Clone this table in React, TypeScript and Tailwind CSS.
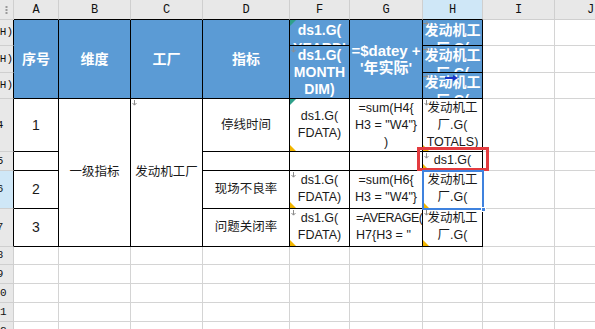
import React from 'react';

const ROW = ['', 'row-start-1', 'row-start-2', 'row-start-3', 'row-start-4', 'row-start-5', 'row-start-6', 'row-start-7', 'row-start-8', 'row-start-9', 'row-start-10', 'row-start-11', 'row-start-12', 'row-start-13'];
const COL = ['', 'col-start-1', 'col-start-2', 'col-start-3', 'col-start-4', 'col-start-5', 'col-start-6', 'col-start-7', 'col-start-8', 'col-start-9', 'col-start-10'];

const blue = 'relative overflow-hidden border-r border-b border-black bg-[#5b9bd5] text-white font-bold text-[14px] leading-[17px] flex flex-col items-center text-center whitespace-nowrap';
const body = 'relative overflow-hidden border-r border-b border-black bg-white text-[12.5px] leading-[17px] text-[#1a1a1a] flex flex-col items-center text-center whitespace-nowrap';
const empty = 'border-r border-b border-[#d4d4d4] bg-white';

// yellow corner flag, bottom-left
const Tri = () => (
  <svg className="absolute left-0 bottom-0" width="6" height="6" viewBox="0 0 6 6">
    <path d="M0 0L6 6H0Z" fill="#f2b600" />
  </svg>
);

// small gray expand arrow, top-left
const Down = () => (
  <svg className="absolute left-[1px] top-[1px]" width="5" height="6" viewBox="0 0 5 6">
    <path d="M2.5 0V5M0.5 3L2.5 5.2L4.5 3" stroke="#8c8c8c" strokeWidth="1" fill="none" />
  </svg>
);

const Right = () => (
  <svg className="absolute left-0 top-[1px]" width="6" height="5" viewBox="0 0 6 5">
    <path d="M0 2.5H5M3 0.5L5.2 2.5L3 4.5" stroke="#8c8c8c" strokeWidth="1" fill="none" />
  </svg>
);

const Teal = () => (
  <svg className="absolute left-0 top-0" width="6" height="6" viewBox="0 0 6 6">
    <path d="M0 0H6L0 6Z" fill="#2fa08a" />
  </svg>
);

const letters = ['A', 'B', 'C', 'D', 'F', 'G', 'H', 'I', 'J'];
const rowLabels = ['1(H)', '2(H)', '3(H)', '4', '5', '6', '7', '8', '9', '10', '11', '12'];

export default function App() {
  return (
    <div className="relative w-[595px] h-[329px] overflow-hidden bg-white font-['Liberation_Sans','Noto_Sans_CJK_SC',sans-serif]">
      <div className="grid grid-cols-[14px_45px_72px_72px_87px_60px_73px_60px_72px_72px] grid-rows-[20px_26px_27px_26px_53px_19px_38px_38px_18px_19px_19px_19px_19px]">
        {/* corner */}
        <div className="col-start-1 row-start-1 border-r border-b border-[#cfcfcf] bg-[#e8e8e8] flex items-center justify-center">
          <svg width="3" height="8" viewBox="0 0 3 8">
            <rect x="0.5" y="0" width="2" height="2" fill="#9a9a9a" />
            <rect x="0.5" y="3" width="2" height="2" fill="#9a9a9a" />
            <rect x="0.5" y="6" width="2" height="2" fill="#9a9a9a" />
          </svg>
        </div>

        {/* column headers */}
        {letters.map((l, i) => (
          <div
            key={l}
            className={`${COL[i + 2]} row-start-1 border-r border-b border-r-[#cfcfcf] ${i < 7 ? 'border-b-black' : 'border-b-[#cfcfcf]'} ${l === 'H' ? 'bg-[#cfe7f7]' : 'bg-[#e8e8e8]'} flex items-center justify-center font-['Liberation_Mono',monospace] text-[12px] text-[#111]`}
          >
            {l}
          </div>
        ))}

        {/* row headers */}
        {rowLabels.map((r, i) => (
          <div
            key={r}
            className={`col-start-1 ${ROW[i + 2]} overflow-hidden border-r border-b border-b-[#cfcfcf] ${i < 7 ? 'border-r-black' : 'border-r-[#cfcfcf]'} ${i === 5 ? 'bg-[#cfe7f7]' : 'bg-[#e8e8e8]'} flex items-center font-['Liberation_Mono',monospace] text-[11px] text-[#111]`}
          >
            {i < 3 ? (
              <div className="w-[13px] flex justify-end">{r}</div>
            ) : (
              <div className="w-[30px] -ml-[15px] shrink-0 text-center">{r}</div>
            )}
          </div>
        ))}

        {/* blue header block */}
        <div className={`${blue} col-start-2 row-start-2 row-span-3 justify-center`}>序号</div>
        <div className={`${blue} col-start-3 row-start-2 row-span-3 justify-center`}>维度</div>
        <div className={`${blue} col-start-4 row-start-2 row-span-3 justify-center`}>工厂</div>
        <div className={`${blue} col-start-5 row-start-2 row-span-3 justify-center`}>指标</div>
        <div className={`${blue} col-start-6 row-start-2 justify-start !leading-[18px] pt-[1px]`}>
          <Teal />
          <span>ds1.G(</span>
          <span>YEARDI</span>
        </div>
        <div className={`${blue} col-start-6 row-start-3 row-span-2 justify-center`}>
          <Down />
          <span>ds1.G(</span>
          <span>MONTH</span>
          <span>DIM)</span>
        </div>
        <div className={`${blue} col-start-7 row-start-2 row-span-3 justify-center text-[15px]`}>
          <span>=$datey +</span>
          <span>'年实际'</span>
        </div>
        <div className={`${blue} col-start-8 row-start-2 justify-start !leading-[18px] pt-[1px]`}>
          <Right />
          <span>发动机工</span>
          <span>厂.G(</span>
        </div>
        <div className={`${blue} col-start-8 row-start-3 justify-start !leading-[18px]`}>
          <Right />
          <span>发动机工</span>
          <span>厂.G(</span>
        </div>
        <div className={`${blue} col-start-8 row-start-4 justify-start !leading-[18px]`}>
          <Right />
          <span>发动机工</span>
          <span>厂.G(</span>
          <svg className="absolute left-[22px] top-[2px]" width="13" height="6" viewBox="0 0 13 6">
            <path d="M0 3H10" stroke="#1832c8" strokeWidth="2" />
            <path d="M8 0L13 3L8 6Z" fill="#1832c8" />
          </svg>
        </div>

        {/* body: col A */}
        <div className={`${body} col-start-2 row-start-5 justify-center text-[14px]`}>1</div>
        <div className={`${body} col-start-2 row-start-6`} />
        <div className={`${body} col-start-2 row-start-7 justify-center text-[14px]`}>2</div>
        <div className={`${body} col-start-2 row-start-8 justify-center text-[14px]`}>3</div>

        {/* B, C merged */}
        <div className={`${body} col-start-3 row-start-5 row-span-4 justify-center`}>一级指标</div>
        <div className={`${body} col-start-4 row-start-5 row-span-4 justify-center`}>
          <Down />
          发动机工厂
        </div>

        {/* D */}
        <div className={`${body} col-start-5 row-start-5 justify-center`}>停线时间</div>
        <div className={`${body} col-start-5 row-start-6`} />
        <div className={`${body} col-start-5 row-start-7 justify-center`}>现场不良率</div>
        <div className={`${body} col-start-5 row-start-8 justify-center`}>问题关闭率</div>

        {/* F */}
        <div className={`${body} col-start-6 row-start-5 justify-center`}>
          <Teal />
          <span>ds1.G(</span>
          <span>FDATA)</span>
          <Tri />
        </div>
        <div className={`${body} col-start-6 row-start-6`} />
        <div className={`${body} col-start-6 row-start-7 justify-start pt-[1px]`}>
          <Down />
          <span>ds1.G(</span>
          <span>FDATA)</span>
          <Tri />
        </div>
        <div className={`${body} col-start-6 row-start-8 justify-start pt-[1px]`}>
          <Down />
          <span>ds1.G(</span>
          <span>FDATA)</span>
          <Tri />
        </div>

        {/* G */}
        <div className={`${body} col-start-7 row-start-5 justify-center`}>
          <span>=sum(H4{'{'}</span>
          <span>H3 = "W4"{'}'}</span>
          <span>)</span>
        </div>
        <div className={`${body} col-start-7 row-start-6`} />
        <div className={`${body} col-start-7 row-start-7 justify-start pt-[1px]`}>
          <span>=sum(H6{'{'}</span>
          <span>H3 = "W4"{'}'}</span>
        </div>
        <div className={`${body} col-start-7 row-start-8 justify-start !items-start pt-[1px] pl-[6px]`}>
          <span className="tracking-[-0.5px]">=AVERAGE(</span>
          <span>H7{'{'}H3 = "</span>
        </div>

        {/* H */}
        <div className={`${body} col-start-8 row-start-5 justify-center`}>
          <Down />
          <span>发动机工</span>
          <span>厂.G(</span>
          <span>TOTALS)</span>
          <Tri />
        </div>
        <div className={`${body} col-start-8 row-start-6 justify-start`}>
          <Down />
          <span>ds1.G(</span>
          <Tri />
        </div>
        <div className={`${body} col-start-8 row-start-7 justify-start pt-[1px]`}>
          <span>发动机工</span>
          <span>厂.G(</span>
          <Tri />
        </div>
        <div className={`${body} col-start-8 row-start-8 justify-start pt-[1px]`}>
          <Down />
          <span>发动机工</span>
          <span>厂.G(</span>
          <Tri />
        </div>

        {/* empty columns I, J next to the table */}
        {[2, 3, 4, 5, 6, 7, 8].map((r) => (
          <React.Fragment key={`ij${r}`}>
            <div className={`${COL[9]} ${ROW[r]} ${empty}`} />
            <div className={`${COL[10]} ${ROW[r]} ${empty}`} />
          </React.Fragment>
        ))}

        {/* empty rows below */}
        {[9, 10, 11, 12, 13].map((r) =>
          [2, 3, 4, 5, 6, 7, 8, 9, 10].map((c) => (
            <div key={`e${r}-${c}`} className={`${COL[c]} ${ROW[r]} ${empty}`} />
          ))
        )}
      </div>

      {/* red annotation box */}
      <div className="absolute left-[417px] top-[147px] w-[72px] h-[24px] border-[3px] border-[#e33b3f]" />

      {/* active cell selection */}
      <div className="absolute left-[422px] top-[170px] w-[62px] h-[40px] border-2 border-[#3f82de]">
        <div className="absolute -right-[4px] -bottom-[4px] w-[5px] h-[5px] bg-[#3f82de] border border-white" />
      </div>
    </div>
  );
}
